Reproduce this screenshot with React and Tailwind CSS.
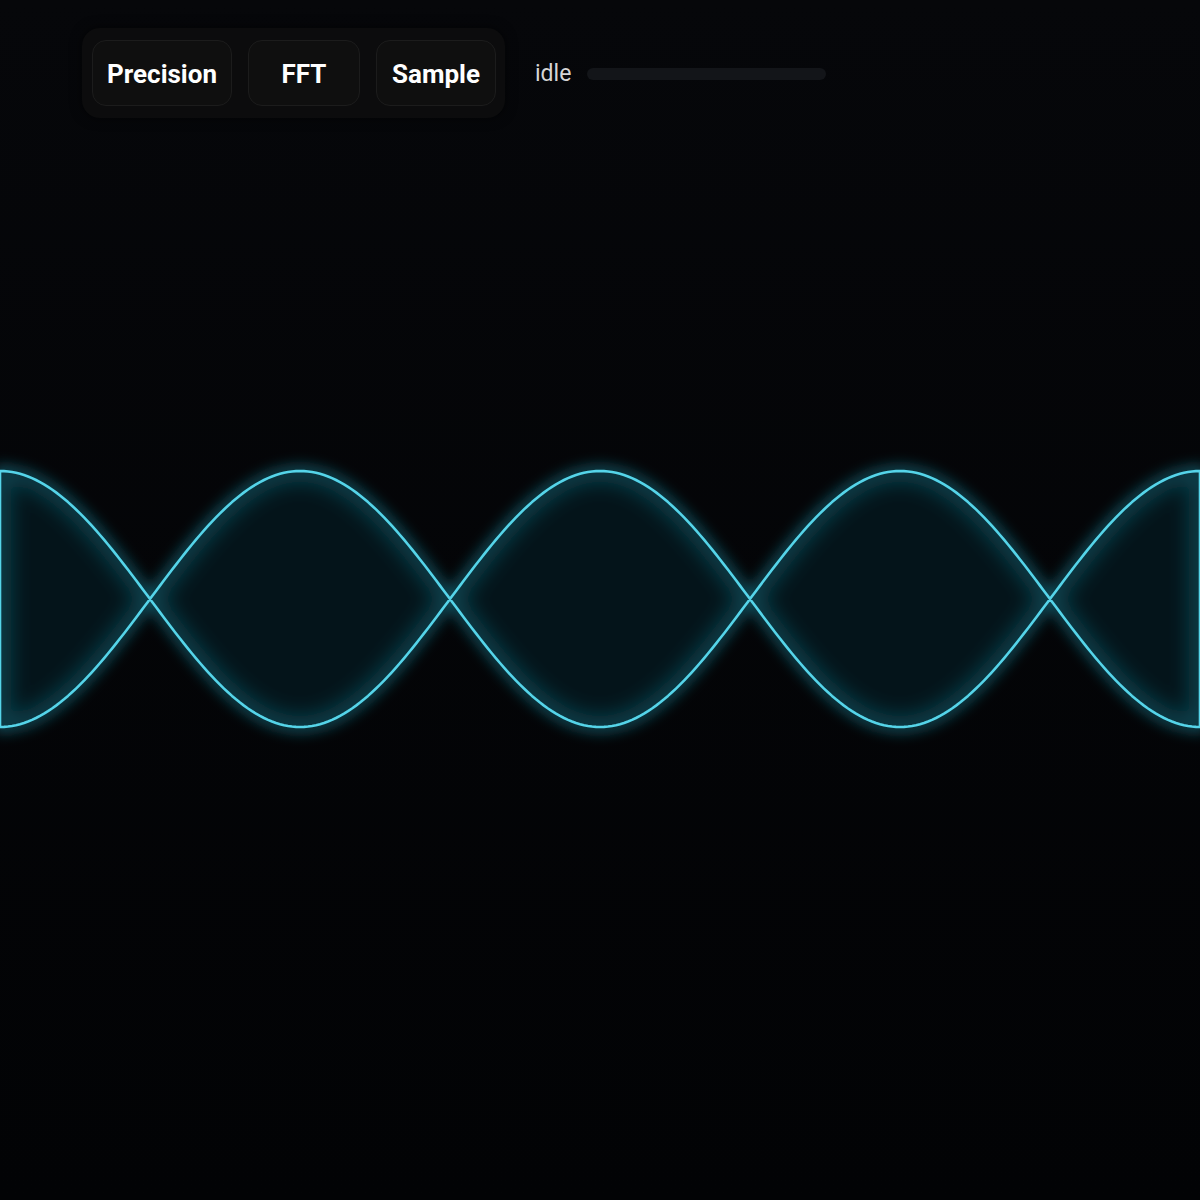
import React from "react";

const W = 1200;
const MID = 599;
const AMP = 128;
const PERIOD = 600;

// two mirrored cosine traces, closed into one band
function buildBand() {
  const top = [];
  const bottom = [];
  for (let x = 0; x <= W; x += 4) {
    const c = Math.cos((2 * Math.PI * x) / PERIOD);
    top.push([x, MID - AMP * c]);
    bottom.push([x, MID + AMP * c]);
  }
  const head = top.map(([x, y], i) => `${i ? "L" : "M"}${x} ${y.toFixed(2)}`).join(" ");
  const tail = bottom
    .slice()
    .reverse()
    .map(([x, y]) => `L${x} ${y.toFixed(2)}`)
    .join(" ");
  return `${head} ${tail} Z`;
}

function Scope() {
  const band = buildBand();
  return (
    <svg width={W} height={1200} viewBox={`0 0 ${W} 1200`} className="block">
      <defs>
        <filter id="halo" x="-10%" y="-40%" width="120%" height="180%">
          <feGaussianBlur stdDeviation="7" />
        </filter>
        <filter id="inner" x="-10%" y="-40%" width="120%" height="180%">
          <feGaussianBlur stdDeviation="10" />
        </filter>
        <clipPath id="bandClip">
          <path d={band} />
        </clipPath>
      </defs>
      <path d={band} fill="none" stroke="#22b8d4" strokeOpacity="0.45" strokeWidth="10" filter="url(#halo)" />
      <path d={band} fill="#04141a" />
      <g clipPath="url(#bandClip)">
        <path d={band} fill="none" stroke="#1b8fa6" strokeOpacity="0.35" strokeWidth="22" filter="url(#inner)" />
      </g>
      <path d={band} fill="none" stroke="#55d4e9" strokeWidth="2.6" strokeLinejoin="round" />
    </svg>
  );
}

function ToolButton({ label, width }) {
  return (
    <button
      className={`${width} h-[66px] rounded-[14px] border border-[#1c1c1c] bg-[#0f0f0f] pt-[2px] text-[26px] font-bold text-white`}
    >
      {label}
    </button>
  );
}

export default function App() {
  return (
    <div
      className="relative h-[1200px] w-[1200px] overflow-hidden bg-gradient-to-b from-[#06070a] to-[#020305]"
      style={{ fontFamily: "Roboto, 'Liberation Sans', sans-serif" }}
    >
      <Scope />
      <div className="absolute left-[82px] top-[28px] flex items-center gap-[30px]">
        <div className="flex h-[90px] items-center gap-4 rounded-[18px] bg-[#0c0c0d] pl-[10px] pr-[9px] shadow-[0_0_12px_rgba(0,0,0,0.6)]">
          <ToolButton label="Precision" width="w-[140px]" />
          <ToolButton label="FFT" width="w-[112px]" />
          <ToolButton label="Sample" width="w-[120px]" />
        </div>
        <div className="flex items-center gap-4">
          <span className="mt-[3px] text-[23px] text-[#d6d6d6]">idle</span>
          <div className="mt-[2px] h-[12px] w-[239px] rounded-full bg-[#131519]" />
        </div>
      </div>
    </div>
  );
}
